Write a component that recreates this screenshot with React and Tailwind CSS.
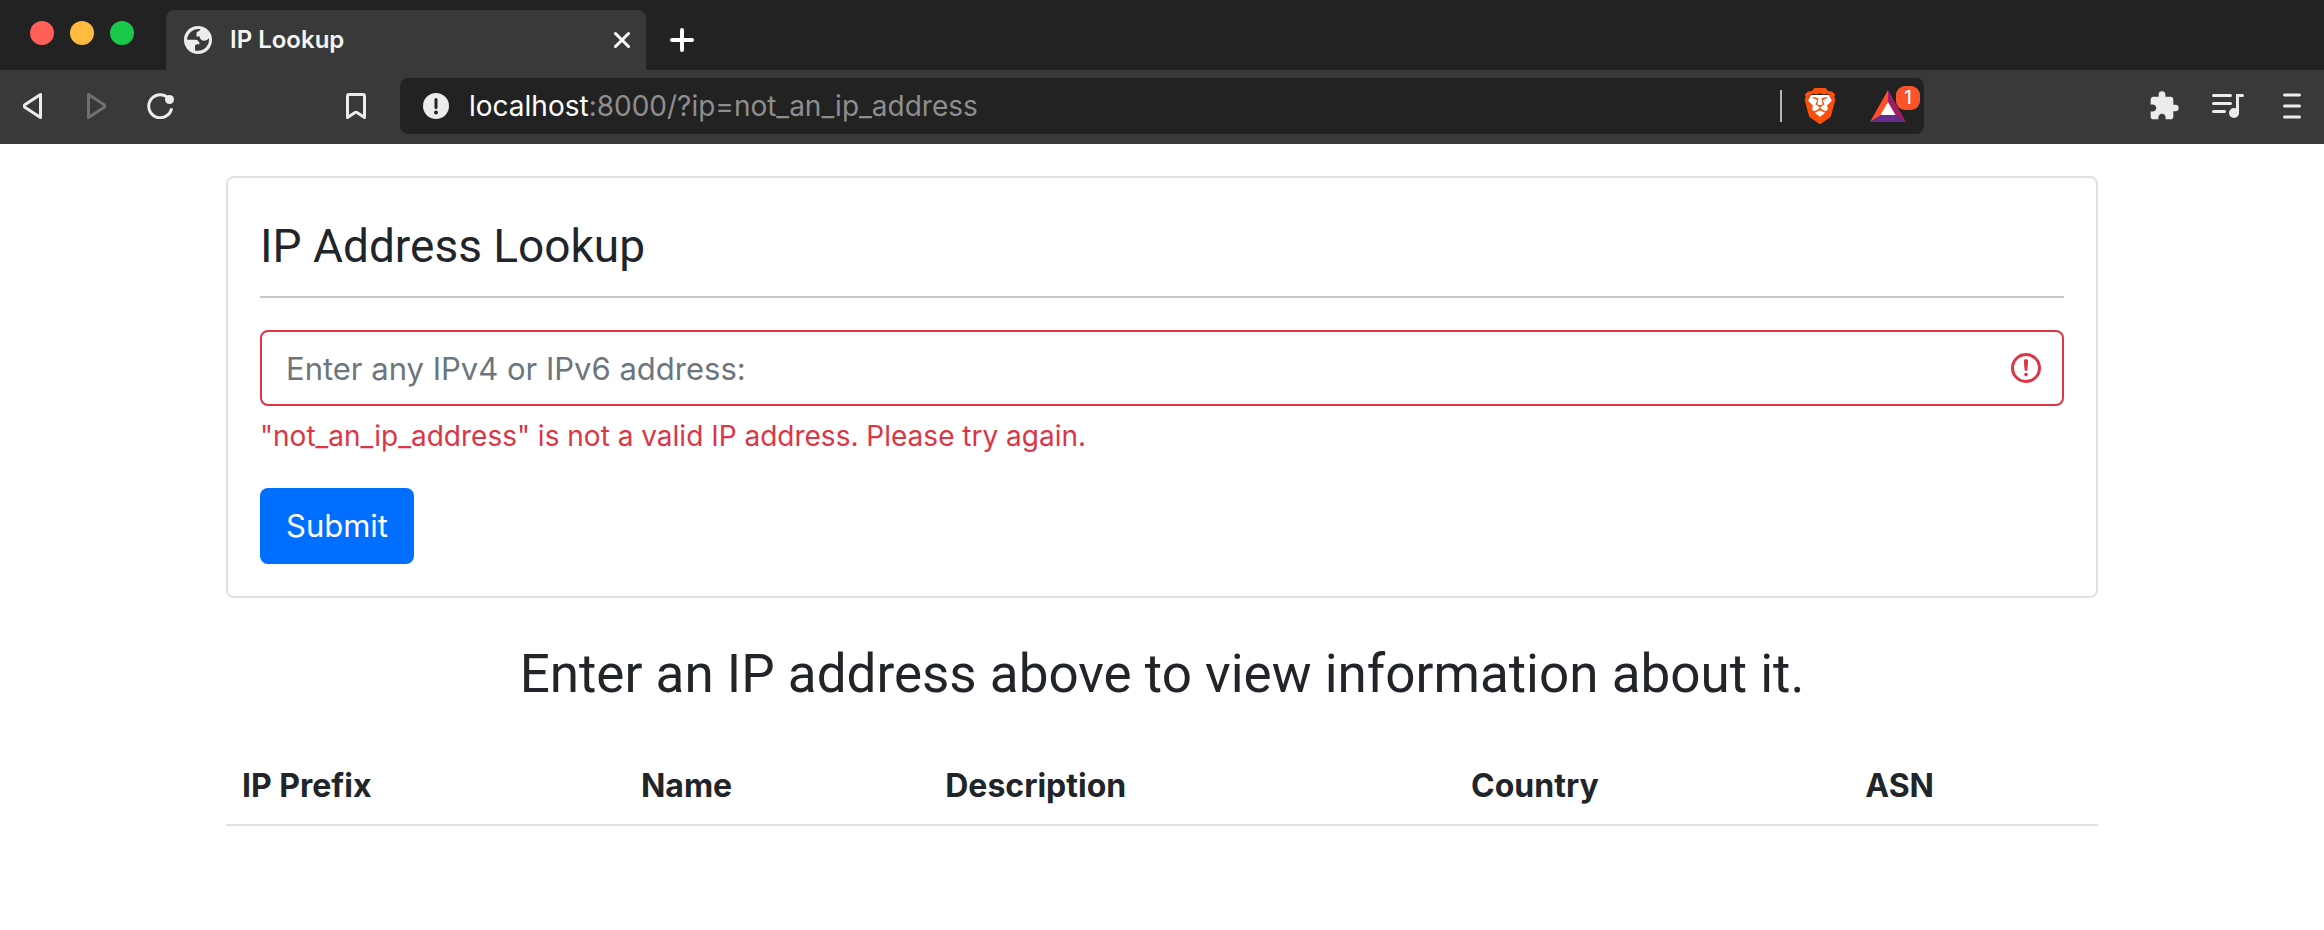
import { MdExtension } from "react-icons/md";
import { SiBrave } from "react-icons/si";

const columns = ["IP Prefix", "Name", "Description", "Country", "ASN"];

function GlobeIcon() {
  return (
    <svg viewBox="0 0 28 28" className="size-7 shrink-0" aria-hidden="true">
      <circle cx="14" cy="14" r="14" fill="#ececec" />
      <path
        d="M16.5 3.2C10 2 3.6 6.800 3 13.800h8c3 0 4.500 1.700 4.500 4.400h-2.500c-1.500 0-2 1-2 2.200v4c7 1.800 14-3.400 14-10.400 0-.7-.1-1.400-.2-1.900-1 1.800-2.600 2.600-4.600 2.600-2.500 0-4.500-1.800-4.500-4.200h-3.200V7.500c0-1.300 1-2.200 2.300-2.200z"
        fill="#393939"
      />
    </svg>
  );
}

function TabStrip() {
  return (
    <div className="flex h-[70px] items-end bg-[#222222]">
      <div className="flex w-[166px] shrink-0 gap-4 self-start pt-[21px] pl-[30px]">
        <button type="button" aria-label="Close window" className="size-6 rounded-full bg-[#ff5f57]" />
        <button type="button" aria-label="Minimize window" className="size-6 rounded-full bg-[#ffbb3f]" />
        <button type="button" aria-label="Zoom window" className="size-6 rounded-full bg-[#1ac84b]" />
      </div>
      <div className="flex h-[60px] w-[480px] items-center rounded-t-lg bg-[#393939] pr-4 pl-[18px]">
        <GlobeIcon />
        <span className="ml-[18px] flex-1 text-2xl font-semibold text-[#f5f5f5]">IP Lookup</span>
        <button type="button" aria-label="Close tab">
          <svg viewBox="0 0 16 20" className="h-5 w-4" stroke="#fff" strokeWidth="3" strokeLinecap="round">
            <path d="M1.500 3.500l13 13M14.500 3.500l-13 13" />
          </svg>
        </button>
      </div>
      <button type="button" aria-label="New tab" className="flex h-[60px] w-[72px] items-center justify-center">
        <svg viewBox="0 0 24 24" className="size-6" stroke="#fff" strokeWidth="4" strokeLinecap="round">
          <path d="M12 2v20M2 12h20" />
        </svg>
      </button>
    </div>
  );
}

function Toolbar() {
  return (
    <div className="flex h-[74px] items-center bg-[#393939] px-[23px] pb-0.5 text-[#ececec]">
      <button type="button" aria-label="Back">
        <svg viewBox="0 0 20 26" className="h-[26px] w-5" fill="none" stroke="currentColor" strokeWidth="3" strokeLinejoin="round">
          <path d="M17.500 1.500v23L1.800 14.300q-1.200-1.300 0-2.600z" />
        </svg>
      </button>
      <button type="button" aria-label="Forward" disabled className="ml-11 text-[#707070]">
        <svg viewBox="0 0 20 26" className="h-[26px] w-5" fill="none" stroke="currentColor" strokeWidth="3" strokeLinejoin="round">
          <path d="M1.500 1.500v23l15.700-10.200q1.200-1.300 0-2.600z" />
        </svg>
      </button>
      <button type="button" aria-label="Reload" className="ml-10">
        <svg viewBox="0 0 28 26" className="h-[26px] w-7" fill="none" stroke="currentColor" strokeWidth="3" strokeLinecap="round">
          <path d="M20 3.900A11.500 11.500 0 1 0 24.300 16.500" />
          <circle cx="22.500" cy="6.500" r="4.500" fill="currentColor" stroke="none" />
        </svg>
      </button>
      <button type="button" aria-label="Bookmark this page" className="ml-[171px]">
        <svg viewBox="0 0 20 26" className="h-[26px] w-5" fill="none" stroke="currentColor" strokeWidth="3" strokeLinejoin="round">
          <path d="M1.500 3q0-1.500 1.500-1.500h14q1.500 0 1.500 1.500v21.500L11 19.600q-1-.8-2 0L1.500 24.500z" />
        </svg>
      </button>
      <div className="ml-[34px] flex h-14 w-[1524px] min-w-0 items-center rounded-lg bg-[#222222] pr-1 pl-[23px]">
        <button type="button" aria-label="Site information">
          <svg viewBox="0 0 26 26" className="size-[26px]" aria-hidden="true">
            <circle cx="13" cy="13" r="13" fill="#ececec" />
            <path d="M13 6.500v8" stroke="#222" strokeWidth="3" strokeLinecap="round" />
            <circle cx="13" cy="19.500" r="2" fill="#222" />
          </svg>
        </button>
        <a href="#address" className="ml-5 flex-1 truncate text-[28px] leading-10 text-[#8e8e8e]">
          <span className="text-white">localhost</span>:8000/?ip=not_an_ip_address
        </a>
        <span className="h-8 w-0.5 bg-[#b4b4b4]" />
        <button type="button" aria-label="Brave Shields" className="relative ml-5 flex h-9 w-9 items-center justify-center">
          <svg viewBox="0 0 36 36" className="absolute size-9" aria-hidden="true">
            <path d="M9 7h18l4 7-6 14-7 5-7-5-6-14z" fill="#fff" />
          </svg>
          <SiBrave className="relative size-9 text-[#fb4f0b]" />
        </button>
        <button type="button" aria-label="Brave Rewards, 1 notification" className="relative ml-8 h-12 w-[50px]">
          <svg viewBox="0 0 36 32" className="absolute top-2 left-0 h-8 w-9" aria-hidden="true">
            <path d="M18 0L0 32l11-7 7-12z" fill="#ff4f27" />
            <path d="M18 0l18 32-11-7-7-12z" fill="#9e1f63" />
            <path d="M0 32h36l-11-7H11z" fill="#662d91" />
            <path d="M18 12l7.500 13h-15z" fill="#fff" />
          </svg>
          <span className="absolute top-1 right-0 flex size-6 items-center justify-center rounded-[9px] bg-[#fb542b] text-lg font-medium text-white">
            1
          </span>
        </button>
      </div>
      <div className="ml-auto flex items-center">
        <button type="button" aria-label="Extensions">
          <MdExtension className="size-8" />
        </button>
        <button type="button" aria-label="Media controls" className="ml-8">
          <svg viewBox="0 0 32 26" className="h-[26px] w-8" fill="none" stroke="currentColor" strokeWidth="3" strokeLinecap="round">
            <path d="M1.500 2.500h17M1.500 10.500h17M1.500 18.500h11M25.500 20V2.500h5" />
            <circle cx="22" cy="20" r="5" fill="currentColor" stroke="none" />
          </svg>
        </button>
        <button type="button" aria-label="Menu" className="ml-[39px]">
          <svg viewBox="0 0 18 26" className="h-[26px] w-[18px]" stroke="currentColor" strokeWidth="3" strokeLinecap="round">
            <path d="M1.500 2h15M1.500 13h15M1.500 24h15" />
          </svg>
        </button>
      </div>
    </div>
  );
}

function LookupCard() {
  return (
    <section className="rounded-lg border-2 border-[#dee2e6] p-8">
      <h1 className="pt-2 font-[Roboto,sans-serif] text-[46px] leading-[56px]">IP Address Lookup</h1>
      <hr className="mt-[22px] border-t-2 border-[#c8c8c8]" />
      <form className="mt-8" onSubmit={(event) => event.preventDefault()}>
        <div className="relative">
          <input
            id="ip"
            type="text"
            aria-label="IP address"
            aria-invalid="true"
            aria-describedby="ip-error"
            placeholder="Enter any IPv4 or IPv6 address:"
            className="block h-[76px] w-full rounded-lg border-2 border-[#dc3545] bg-white pr-20 pl-6 text-[31px] outline-none placeholder:text-[#6c757d]"
          />
          <svg viewBox="0 0 12 12" className="absolute top-[20px] right-[20px] size-9" fill="none" stroke="#dc3545" aria-hidden="true">
            <circle cx="6" cy="6" r="4.500" />
            <path strokeLinejoin="round" d="M5.800 3.600h.4L6 6.500z" />
            <circle cx="6" cy="8.200" r=".6" fill="#dc3545" stroke="none" />
          </svg>
        </div>
        <p id="ip-error" className="pt-[10px] text-[28px] leading-10 text-[#dc3545]">
          "not_an_ip_address" is not a valid IP address. Please try again.
        </p>
        <button type="submit" className="mt-8 h-[76px] rounded-lg bg-[#006eff] px-[26px] text-[31px] text-white">
          Submit
        </button>
      </form>
    </section>
  );
}

export default function App() {
  return (
    <div className="min-h-screen bg-white font-[Inter,sans-serif] text-[#212529]">
      <header>
        <TabStrip />
        <Toolbar />
      </header>
      <main className="mx-auto max-w-[1872px] pt-8">
        <LookupCard />
        <h2 className="mt-[42px] text-center font-[Roboto,sans-serif] text-[53px] leading-[68px]">
          Enter an IP address above to view information about it.
        </h2>
        <table className="mt-[38px] w-full border-b-2 border-[#dee2e6] text-left">
          <thead>
            <tr>
              {columns.map((column) => (
                <th key={column} scope="col" className="px-4 pt-4 pb-[14px] text-[32px] leading-12 font-bold">
                  {column}
                </th>
              ))}
            </tr>
          </thead>
        </table>
      </main>
    </div>
  );
}
